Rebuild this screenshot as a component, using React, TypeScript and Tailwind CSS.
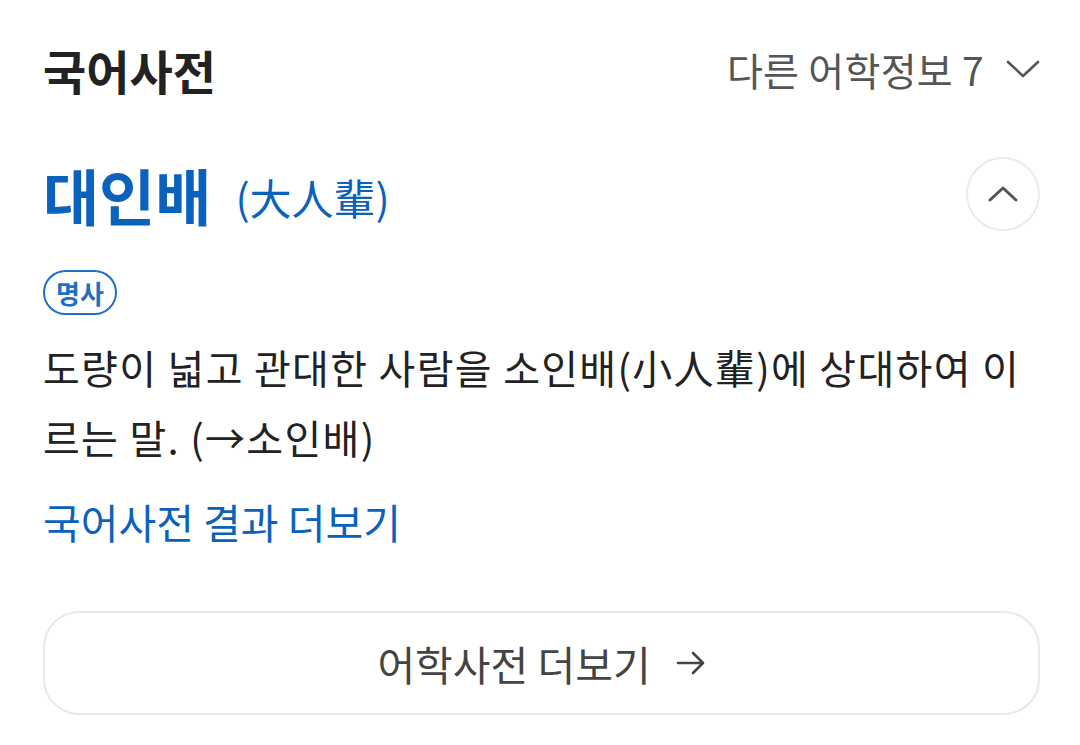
import React from "react";

const font = { fontFamily: '"Noto Sans CJK KR", "Noto Sans", sans-serif' };

export default function App() {
  return (
    <div className="w-[1080px] h-[745px] bg-white overflow-hidden" style={font}>
      <div className="pl-[43px] pr-[40px] pt-[39px]">
        <div className="flex items-center justify-between h-[60px]">
          <h1 className="text-[47px] font-bold text-[#222] leading-none">국어사전</h1>
          <div className="flex items-center gap-[22px] text-[#555]">
            <span className="text-[39px] leading-none tracking-[0.3px]">다른 어학정보 7</span>
            <svg width="34" height="20" viewBox="0 0 34 20" fill="none" stroke="#555" strokeWidth="2.6" strokeLinecap="round" strokeLinejoin="round">
              <path d="M2 3 L17 17 L32 3" />
            </svg>
          </div>
        </div>

        <div className="flex items-center justify-between mt-[58px] h-[74px]">
          <div className="flex items-center gap-[24px]">
            <span className="text-[61px] font-bold text-[#0b62bd] leading-none">대인배</span>
            <span className="text-[42px] text-[#0b62bd] leading-none mt-[6px]">(大人輩)</span>
          </div>
          <button className="w-[74px] h-[74px] rounded-full border-2 border-[#ebebeb] flex items-center justify-center">
            <svg width="30" height="18" viewBox="0 0 30 18" fill="none" stroke="#555" strokeWidth="3" strokeLinecap="round" strokeLinejoin="round">
              <path d="M2 15 L15 3 L28 15" />
            </svg>
          </button>
        </div>

        <div className="mt-[39px] flex">
          <span className="inline-flex items-center justify-center h-[45px] w-[74px] rounded-full border-2 border-[#1f6fc5] text-[#1f6fc5] text-[26px] font-bold leading-none">명사</span>
        </div>

        <p className="mt-[17px] text-[40px] leading-[70px] text-[#222] tracking-[1.3px]">
          도량이 넓고 관대한 사람을 소인배(小人輩)에 상대하여 이르는 말. (→소인배)
        </p>

        <div className="mt-[24px] text-[41px] leading-[50px] text-[#0b62bd]">국어사전 결과 더보기</div>

        <button className="mt-[65px] w-full h-[104px] rounded-[36px] border-2 border-[#e8e8e8] flex items-center justify-center gap-[25px] text-[#444]">
          <span className="text-[41px] leading-none">어학사전 더보기</span>
          <svg width="30" height="26" viewBox="0 0 30 26" fill="none" stroke="#444" strokeWidth="2.6" strokeLinecap="round" strokeLinejoin="round">
            <path d="M2 13 H27 M17 3 L27 13 L17 23" />
          </svg>
        </button>
      </div>
    </div>
  );
}
